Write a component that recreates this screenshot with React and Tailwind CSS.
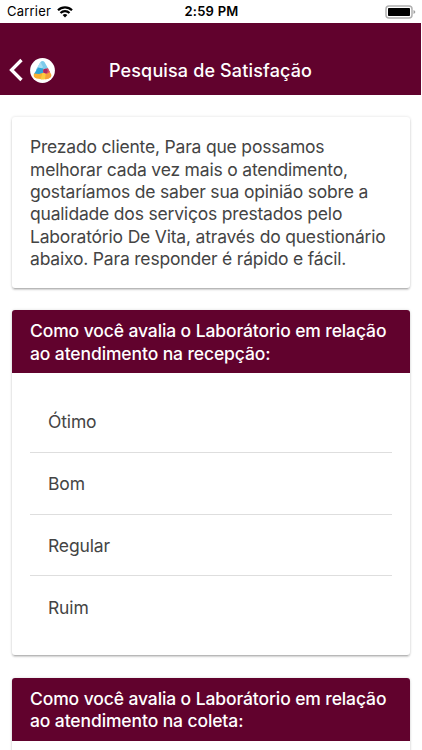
import React from 'react'

const intro = [
  'Prezado cliente, Para que possamos',
  'melhorar cada vez mais o atendimento,',
  'gostaríamos de saber sua opinião sobre a',
  'qualidade dos serviços prestados pelo',
  'Laboratório De Vita, através do questionário',
  'abaixo. Para responder é rápido e fácil.',
]

const questions = [
  {
    id: 'recepcao',
    title: ['Como você avalia o Laborátorio em relação', 'ao atendimento na recepção:'],
    options: ['Ótimo', 'Bom', 'Regular', 'Ruim'],
  },
  {
    id: 'coleta',
    title: ['Como você avalia o Laborátorio em relação', 'ao atendimento na coleta:'],
    options: [],
  },
]

function WifiIcon() {
  return (
    <svg width="16" height="12" viewBox="0 0 16 12" fill="none" stroke="#000" strokeWidth="2.2">
      <path d="M1 4.3a10 10 0 0 1 14 0" />
      <path d="M3.5 7a6.4 6.4 0 0 1 9 0" />
      <path d="M8 11.6 5.6 9.1a3.5 3.5 0 0 1 4.8 0z" fill="#000" stroke="none" />
    </svg>
  )
}

function BatteryIcon() {
  return (
    <svg width="31" height="14" viewBox="0 0 31 14">
      <rect x="1" y="1" width="26" height="12" rx="3" fill="#fff" stroke="#b0b0b0" strokeWidth="1.5" />
      <rect x="3" y="3" width="22" height="8" rx="0.8" fill="#000" />
      <path d="M28.5 5v4c1.3-.5 1.8-1.2 1.8-2s-.5-1.5-1.8-2z" fill="#a0a0a0" />
    </svg>
  )
}

function Logo() {
  return (
    <svg width="25" height="25" viewBox="0 0 25 25">
      <circle cx="12.5" cy="12.5" r="12.4" fill="#fff" />
      <path d="M10.5 4C11.5 2.5 13.5 2.5 14.5 4L19 12L12 15L6 12Z" fill="#7ccbea" />
      <path d="M10.5 4L6.5 11L10 13L13 9Z" fill="#a6dcf0" />
      <path d="M8 9.5L4 16L9 17L14 15L13 10.5Z" fill="#2ea6d8" />
      <path d="M4 15.5C3 18 4 20 6.5 20.500L12 21.300L14 14.500L9 16Z" fill="#f8b133" />
      <path d="M12.500 15L10.500 21.200C14 21.600 17 21.300 19 20.500L18 15Z" fill="#fbcb3f" />
      <path d="M16 14L15 21.200C19.500 21 22.500 19 21 16L18.500 11.500Z" fill="#f6a03a" />
      <path d="M13 11.500L17.800 10L20 14L16.500 16L13 14.500Z" fill="#dc5068" />
      <circle cx="15.5" cy="13" r="2.2" fill="#a82a63" />
    </svg>
  )
}

function StatusBar() {
  return (
    <div className="flex h-[23px] items-center justify-between pl-[7px] pr-[6px] text-[13px] leading-none text-black">
      <div className="flex flex-1 items-center gap-[6px]">
        <span className="tracking-[0.2px]">Carrier</span>
        <WifiIcon />
      </div>
      <span className="font-semibold tracking-[0.25px]">2:59 PM</span>
      <div className="flex flex-1 justify-end">
        <BatteryIcon />
      </div>
    </div>
  )
}

function Header() {
  return (
    <header className="mr-px flex h-[72px] items-center bg-[#61022d] pt-[22px] pl-[9px] text-white">
      <button className="flex items-center gap-[7px]">
        <svg width="14" height="24" viewBox="0 0 14 24" fill="none" stroke="#fff" strokeWidth="3.3">
          <path d="M12.5 2 2.5 12l10 10" />
        </svg>
        <Logo />
      </button>
      <h1 className="ml-[54px] pt-px whitespace-nowrap text-[18px] font-medium leading-none tracking-[0.14px]">
        Pesquisa de Satisfação
      </h1>
    </header>
  )
}

function Card({ children }) {
  return (
    <section className="overflow-hidden rounded-[3px] bg-white shadow-[0_2px_2px_0_rgba(0,0,0,0.16),0_3px_1px_-2px_rgba(0,0,0,0.12),0_0_3px_0_rgba(0,0,0,0.14)]">
      {children}
    </section>
  )
}

function Lines({ lines }) {
  return lines.map((line) => (
    <span key={line} className="block">
      {line}
    </span>
  ))
}

function Question({ title, options }) {
  return (
    <Card>
      <h2 className="h-[63px] bg-[#61022d] px-[18px] pt-[10.2px] text-[17.5px] font-medium leading-[22.4px] tracking-[-0.11px] whitespace-nowrap text-white">
        <Lines lines={title} />
      </h2>
      <ul className="px-[18px] pt-[18px] pb-[17px]">
        {options.map((option) => (
          <li
            key={option}
            className="flex h-[61.8px] items-center border-b border-[#dedede] pt-[1.6px] pl-[18px] text-[17.5px] tracking-[-0.15px] text-[#444] last:border-b-0"
          >
            {option}
          </li>
        ))}
      </ul>
    </Card>
  )
}

export default function App() {
  return (
    <div className="h-[750px] overflow-hidden bg-white font-['Inter','Liberation_Sans',sans-serif]">
      <StatusBar />
      <Header />
      <main className="flex flex-col gap-[22.4px] pt-[22px] pr-[12px] pl-[12px]">
        <Card>
          <p className="h-[170.6px] px-[18px] pt-[19.2px] text-[17.5px] leading-[22.4px] tracking-[-0.19px] whitespace-nowrap text-[#444]">
            <Lines lines={intro} />
          </p>
        </Card>
        {questions.map((q) => (
          <Question key={q.id} title={q.title} options={q.options} />
        ))}
      </main>
    </div>
  )
}
